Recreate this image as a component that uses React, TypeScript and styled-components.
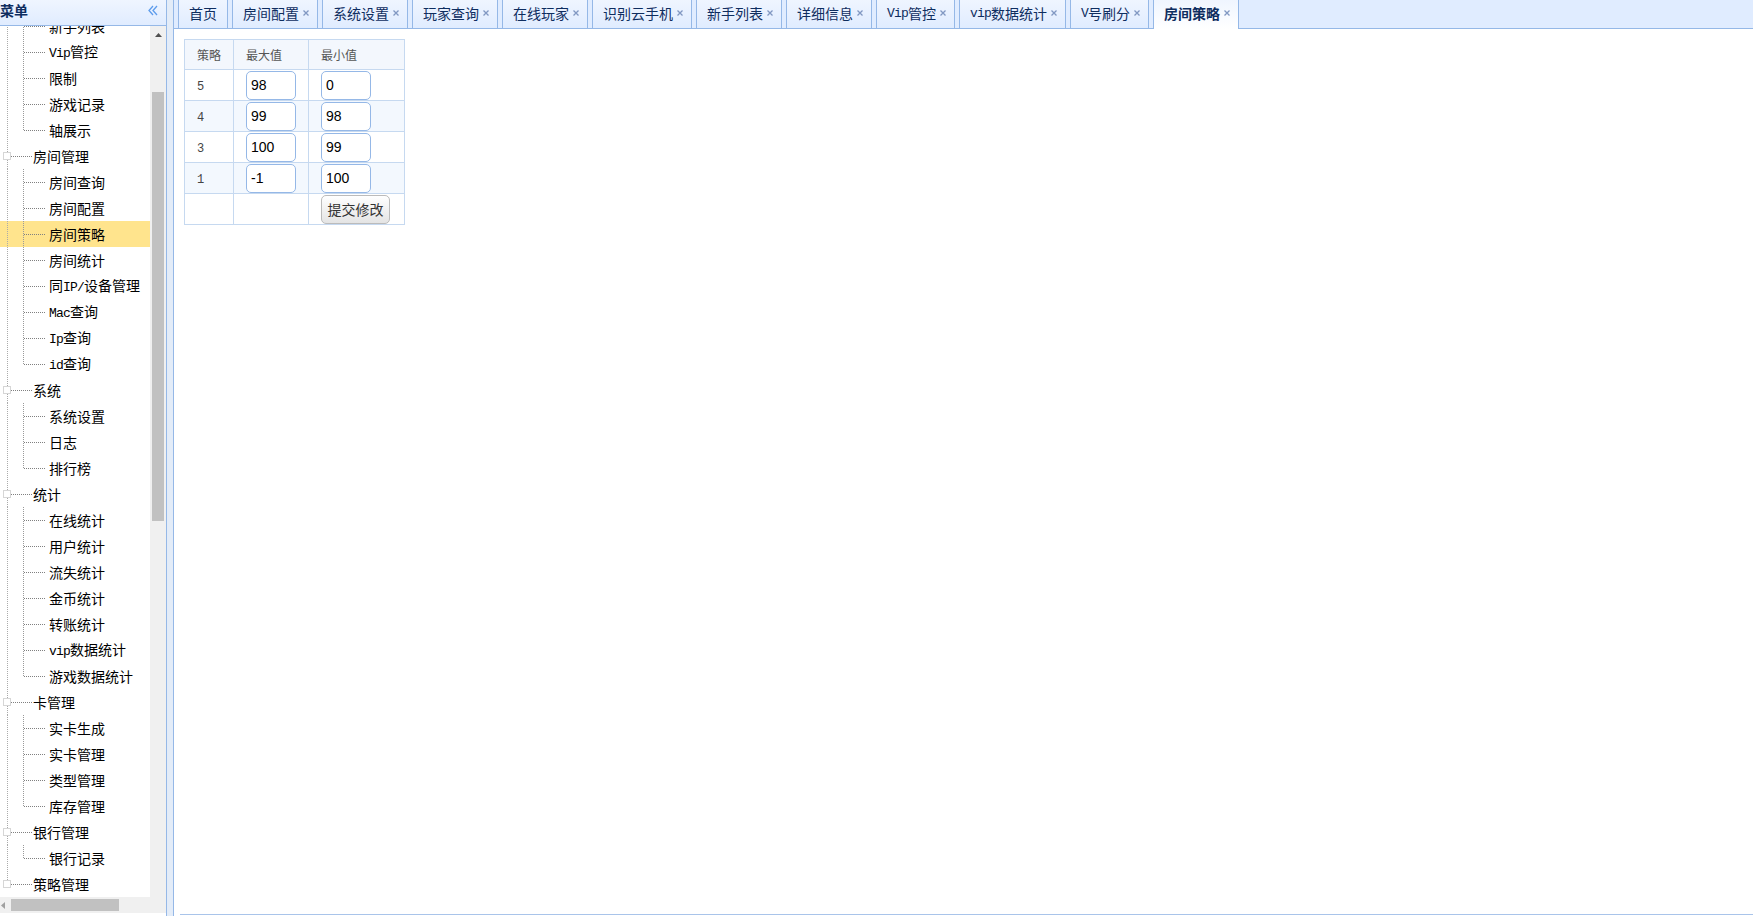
import React, { useLayoutEffect, useRef } from 'react';
import styled, { createGlobalStyle } from 'styled-components';

const GlobalStyle = createGlobalStyle`
  *, *::before, *::after { box-sizing: border-box; }
  html, body { margin: 0; padding: 0; height: 100%; overflow: hidden; background: #fff; }
  body {
    font-family: "Noto Sans CJK SC", "Noto Sans", sans-serif;
    font-size: 14px;
    color: #000;
  }
  #root { height: 100%; }
`;

/* ---------- menu data ---------- */

type Group = { title: string; children: string[] };

const MENU: Group[] = [
  { title: '玩家管理', children: ['玩家查询', '在线玩家', '识别云手机', '详细信息', '新手列表', 'Vip管控', '限制', '游戏记录', '轴展示'] },
  { title: '房间管理', children: ['房间查询', '房间配置', '房间策略', '房间统计', '同IP/设备管理', 'Mac查询', 'Ip查询', 'id查询'] },
  { title: '系统', children: ['系统设置', '日志', '排行榜'] },
  { title: '统计', children: ['在线统计', '用户统计', '流失统计', '金币统计', '转账统计', 'vip数据统计', '游戏数据统计'] },
  { title: '卡管理', children: ['实卡生成', '实卡管理', '类型管理', '库存管理'] },
  { title: '银行管理', children: ['银行记录'] },
  { title: '策略管理', children: ['策略配置', '策略记录'] },
];

const SELECTED_ITEM = '房间策略';
const TREE_SCROLL = 143;

const TABS = [
  { title: '首页', closable: false },
  { title: '房间配置', closable: true },
  { title: '系统设置', closable: true },
  { title: '玩家查询', closable: true },
  { title: '在线玩家', closable: true },
  { title: '识别云手机', closable: true },
  { title: '新手列表', closable: true },
  { title: '详细信息', closable: true },
  { title: 'Vip管控', closable: true },
  { title: 'vip数据统计', closable: true },
  { title: 'V号刷分', closable: true },
  { title: '房间策略', closable: true },
];
const ACTIVE_TAB = '房间策略';

const STRATEGIES = [
  { id: 5, max: '98', min: '0' },
  { id: 4, max: '99', min: '98' },
  { id: 3, max: '100', min: '99' },
  { id: 1, max: '-1', min: '100' },
];

/* ---------- shared text ---------- */

const Latin = styled.span`
  font-family: "Liberation Mono", monospace;
  font-size: 13px;
  letter-spacing: -0.8px;
`;

function MixedText({ text }: { text: string }) {
  const parts = text.split(/([\x21-\x7e]+)/).filter(Boolean);
  return (
    <>
      {parts.map((p, i) =>
        /^[\x21-\x7e]+$/.test(p) ? <Latin key={i}>{p}</Latin> : <React.Fragment key={i}>{p}</React.Fragment>
      )}
    </>
  );
}

/* ---------- layout ---------- */

const Page = styled.div`
  display: flex;
  height: 100vh;
  width: 100vw;
`;

const West = styled.aside`
  width: 167px;
  flex: none;
  display: flex;
  flex-direction: column;
  border-right: 1px solid #95b8e7;
  padding-bottom: 3px;
`;

const WestHeader = styled.div`
  height: 26px;
  flex: none;
  display: flex;
  align-items: center;
  justify-content: space-between;
  padding: 0 8px 5px 0;
  border-bottom: 1px solid #95b8e7;
  background: linear-gradient(to bottom, #eff5ff 0%, #e0ecff 100%);
`;

const WestTitle = styled.span`
  font-size: 14px;
  font-weight: bold;
  color: #0e2d5f;
  line-height: 1;
`;

const CollapseIcon = () => (
  <svg width="10" height="11" viewBox="0 0 10 11">
    <path d="M5 1 L1 5.5 L5 10 M9 1 L5 5.5 L9 10" fill="none" stroke="#5d9cec" strokeWidth="1.3" />
  </svg>
);

const WestBody = styled.div`
  flex: 1;
  min-height: 0;
  display: grid;
  grid-template-columns: 150px 16px;
  grid-template-rows: 1fr 16px;
`;

const TreeViewport = styled.div`
  grid-column: 1;
  grid-row: 1;
  overflow: hidden;
  background: #fff;
`;

const VScroll = styled.div`
  grid-column: 2;
  grid-row: 1 / span 2;
  background: #f0f0f0;
  display: flex;
  flex-direction: column;
  align-items: center;
`;

const ScrollArrowV = styled.div`
  height: 17px;
  width: 100%;
  display: flex;
  align-items: center;
  justify-content: center;
`;

const VThumb = styled.div<{ $offset: number; $size: number }>`
  width: 12px;
  margin-top: ${(p) => p.$offset}px;
  height: ${(p) => p.$size}px;
  background: #c1c1c1;
`;

const HScroll = styled.div`
  grid-column: 1;
  grid-row: 2;
  background: #f0f0f0;
  display: flex;
  align-items: center;
  padding-left: 1px;
`;

const HThumb = styled.div<{ $offset: number; $size: number }>`
  height: 12px;
  margin-left: ${(p) => p.$offset}px;
  width: ${(p) => p.$size}px;
  background: #c1c1c1;
`;

const Splitter = styled.div`
  width: 6px;
  flex: none;
  background: #e3ecf8;
`;

const Center = styled.main`
  flex: 1;
  min-width: 0;
  display: flex;
  flex-direction: column;
  border-left: 1px solid #95b8e7;
`;

/* ---------- tree ---------- */

const TreeList = styled.ul`
  list-style: none;
  margin: 0;
  padding: 0;
`;

const TreeRow = styled.li<{ $selected?: boolean }>`
  height: 26px;
  display: flex;
  align-items: center;
  white-space: nowrap;
  background: ${(p) => (p.$selected ? '#ffe48d' : 'transparent')};
  cursor: pointer;
`;

const TreeLabel = styled.span<{ $child?: boolean }>`
  padding-left: ${(p) => (p.$child ? 1 : 0)}px;
  font-size: 14px;
  line-height: 26px;
  color: #000;
`;

const Dots = ({ x1, y1, x2, y2, color }: { x1: number; y1: number; x2: number; y2: number; color: string }) => (
  <line x1={x1} y1={y1} x2={x2} y2={y2} stroke={color} strokeWidth="1" strokeDasharray="1 1" shapeRendering="crispEdges" />
);

function GroupLines({ first, last }: { first: boolean; last: boolean }) {
  return (
    <svg width="33" height="26" viewBox="0 0 33 26">
      {!first && <Dots x1={7.5} y1={0} x2={7.5} y2={9} color="#aaa" />}
      {!last && <Dots x1={7.5} y1={17} x2={7.5} y2={26} color="#aaa" />}
      <rect x="3.5" y="9.5" width="7" height="7" fill="#fff" stroke="#d6d6d6" shapeRendering="crispEdges" />
      <Dots x1={11} y1={13.5} x2={33} y2={13.5} color="#808080" />
    </svg>
  );
}

function ChildLines({ lastChild, groupLast }: { lastChild: boolean; groupLast: boolean }) {
  return (
    <svg width="48" height="26" viewBox="0 0 48 26">
      {!groupLast && <Dots x1={7.5} y1={0} x2={7.5} y2={26} color="#aaa" />}
      <Dots x1={23.5} y1={0} x2={23.5} y2={lastChild ? 14 : 26} color="#999" />
      <Dots x1={24} y1={13.5} x2={46} y2={13.5} color="#808080" />
    </svg>
  );
}

function MenuTree() {
  const ref = useRef<HTMLDivElement>(null);
  useLayoutEffect(() => {
    if (ref.current) ref.current.scrollTop = TREE_SCROLL;
  }, []);

  return (
    <TreeViewport ref={ref}>
      <TreeList>
        {MENU.map((g, gi) => {
          const first = gi === 0;
          const last = gi === MENU.length - 1;
          return (
            <React.Fragment key={g.title}>
              <TreeRow>
                <GroupLines first={first} last={last} />
                <TreeLabel>
                  <MixedText text={g.title} />
                </TreeLabel>
              </TreeRow>
              {g.children.map((c, ci) => (
                <TreeRow key={c} $selected={c === SELECTED_ITEM}>
                  <ChildLines lastChild={ci === g.children.length - 1} groupLast={last} />
                  <TreeLabel $child>
                    <MixedText text={c} />
                  </TreeLabel>
                </TreeRow>
              ))}
            </React.Fragment>
          );
        })}
      </TreeList>
    </TreeViewport>
  );
}

/* ---------- tabs ---------- */

const TabBar = styled.div`
  height: 29px;
  flex: none;
  display: flex;
  align-items: flex-end;
  gap: 4px;
  padding-left: 4px;
  background: #e0ecff;
  border-bottom: 1px solid #95b8e7;
`;

const Tab = styled.div<{ $closable: boolean; $active: boolean }>`
  height: ${(p) => (p.$active ? 29 : 28)}px;
  margin-bottom: ${(p) => (p.$active ? -1 : 0)}px;
  flex: none;
  display: flex;
  align-items: center;
  padding: ${(p) => (p.$closable ? '0 8px 0 10px' : '0 10px')};
  padding-bottom: ${(p) => (p.$active ? 3 : 2)}px;
  border-left: 1px solid #95b8e7;
  border-right: 1px solid #95b8e7;
  background: ${(p) =>
    p.$active
      ? 'linear-gradient(to bottom, #eff5ff 0%, #ffffff 100%)'
      : 'linear-gradient(to bottom, #eff5ff 0%, #e0ecff 100%)'};
  color: #0e2d5f;
  font-size: 14px;
  font-weight: ${(p) => (p.$active ? 'bold' : 'normal')};
  white-space: nowrap;
  cursor: pointer;
`;

const TabClose = styled.span`
  display: inline-flex;
  margin-left: 4px;
  width: 6px;
`;

const CloseIcon = () => (
  <svg width="6" height="6" viewBox="0 0 6 6">
    <path d="M0.5 0.5 L5.5 5.5 M5.5 0.5 L0.5 5.5" stroke="#8097c2" strokeWidth="1.3" />
  </svg>
);

const TabBody = styled.div`
  flex: 1;
  min-height: 0;
  display: flex;
  flex-direction: column;
  padding: 0 0 1px 6px;
  background: #fff;
`;

const TabPanel = styled.div`
  flex: 1;
  padding: 10px 0 0 4px;
  border-bottom: 1px solid #a9c4ea;
`;

/* ---------- strategy table ---------- */

const Grid = styled.table`
  border-collapse: collapse;
  table-layout: fixed;
  width: 221px;
  border: 1px solid #c6d9f0;
`;

const HeadCell = styled.th`
  height: 30px;
  padding: 0 0 1px 12px;
  border: 1px solid #c6d9f0;
  background: #f3f7fd;
  text-align: left;
  font-size: 12px;
  font-weight: normal;
  color: #555;
`;

const BodyRow = styled.tr<{ $alt: boolean }>`
  background: ${(p) => (p.$alt ? '#f3f8fe' : '#ffffff')};
`;

const Cell = styled.td`
  height: 31px;
  padding: 0 0 0 12px;
  border: 1px solid #c6d9f0;
  vertical-align: middle;
`;

const IdText = styled.span`
  display: inline-block;
  margin-bottom: 2px;
  font-family: "Liberation Mono", monospace;
  font-size: 12px;
  color: #444;
`;

const ValueInput = styled.input`
  display: block;
  width: 50px;
  height: 29px;
  padding: 0 4px 1px;
  border: 1px solid #95b8e7;
  border-radius: 5px;
  background: #fff;
  font-family: "Liberation Sans", Arial, sans-serif;
  font-size: 14px;
  color: #000;
  outline: none;
`;

const SubmitButton = styled.button`
  display: block;
  width: 69px;
  height: 29px;
  padding: 0 0 1px;
  border: 1px solid #bbbbbb;
  border-radius: 5px;
  background: linear-gradient(to bottom, #ffffff 0%, #e4e4e4 100%);
  font-family: "Noto Sans CJK SC", sans-serif;
  font-size: 14px;
  color: #333;
  cursor: pointer;
`;

function StrategyTable() {
  return (
    <Grid>
      <colgroup>
        <col style={{ width: 49 }} />
        <col style={{ width: 75 }} />
        <col style={{ width: 96 }} />
      </colgroup>
      <thead>
        <tr>
          <HeadCell>策略</HeadCell>
          <HeadCell>最大值</HeadCell>
          <HeadCell>最小值</HeadCell>
        </tr>
      </thead>
      <tbody>
        {STRATEGIES.map((s, i) => (
          <BodyRow key={s.id} $alt={i % 2 === 1}>
            <Cell>
              <IdText>{s.id}</IdText>
            </Cell>
            <Cell>
              <ValueInput defaultValue={s.max} />
            </Cell>
            <Cell>
              <ValueInput defaultValue={s.min} />
            </Cell>
          </BodyRow>
        ))}
        <BodyRow $alt={false}>
          <Cell />
          <Cell />
          <Cell>
            <SubmitButton type="button">提交修改</SubmitButton>
          </Cell>
        </BodyRow>
      </tbody>
    </Grid>
  );
}

/* ---------- page ---------- */

export default function App() {
  return (
    <>
      <GlobalStyle />
      <Page>
        <West>
          <WestHeader>
            <WestTitle>菜单</WestTitle>
            <CollapseIcon />
          </WestHeader>
          <WestBody>
            <MenuTree />
            <VScroll>
              <ScrollArrowV>
                <svg width="7" height="4" viewBox="0 0 7 4">
                  <path d="M3.5 0 L7 4 L0 4 Z" fill="#505050" />
                </svg>
              </ScrollArrowV>
              <VThumb $offset={49} $size={429} />
            </VScroll>
            <HScroll>
              <svg width="4" height="7" viewBox="0 0 4 7">
                <path d="M0 3.5 L4 0 L4 7 Z" fill="#a0a0a0" />
              </svg>
              <HThumb $offset={6} $size={108} />
            </HScroll>
          </WestBody>
        </West>
        <Splitter />
        <Center>
          <TabBar>
            {TABS.map((t) => (
              <Tab key={t.title} $closable={t.closable} $active={t.title === ACTIVE_TAB}>
                <MixedText text={t.title} />
                {t.closable && (
                  <TabClose>
                    <CloseIcon />
                  </TabClose>
                )}
              </Tab>
            ))}
          </TabBar>
          <TabBody>
            <TabPanel>
              <StrategyTable />
            </TabPanel>
          </TabBody>
        </Center>
      </Page>
    </>
  );
}
